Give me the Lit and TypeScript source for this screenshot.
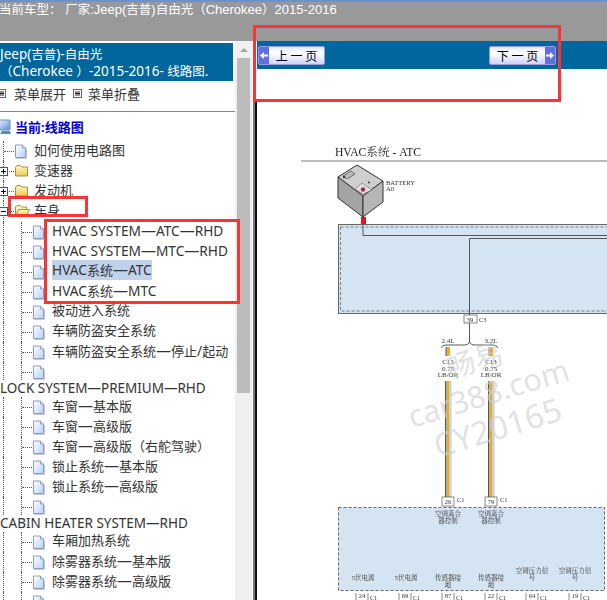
import { LitElement, html, css, svg } from "lit";
import { customElement } from "lit/decorators.js";

type Row = { t: string; k: "file" | "folder" | "open" | "sub" | "blank" | "head"; sel?: boolean };

const rows: Row[] = [
  { t: "如何使用电路图", k: "file" },
  { t: "变速器", k: "folder" },
  { t: "发动机", k: "folder" },
  { t: "车身", k: "open" },
  { t: "HVAC SYSTEM—ATC—RHD", k: "sub" },
  { t: "HVAC SYSTEM—MTC—RHD", k: "sub" },
  { t: "HVAC系统—ATC", k: "sub", sel: true },
  { t: "HVAC系统—MTC", k: "sub" },
  { t: "被动进入系统", k: "sub" },
  { t: "车辆防盗安全系统", k: "sub" },
  { t: "车辆防盗安全系统—停止/起动", k: "sub" },
  { t: "", k: "blank" },
  { t: "LOCK SYSTEM—PREMIUM—RHD", k: "head" },
  { t: "车窗—基本版", k: "sub" },
  { t: "车窗—高级版", k: "sub" },
  { t: "车窗—高级版（右舵驾驶）", k: "sub" },
  { t: "锁止系统—基本版", k: "sub" },
  { t: "锁止系统—高级版", k: "sub" },
  { t: "", k: "blank" },
  { t: "CABIN HEATER SYSTEM—RHD", k: "head" },
  { t: "车厢加热系统", k: "sub" },
  { t: "除雾器系统—基本版", k: "sub" },
  { t: "除雾器系统—高级版", k: "sub" },
  { t: "", k: "blank" },
];

/* Splits a label into Latin runs, dashes and CJK runs: the source's UI font sets them at different sizes. */
const mix = (t: string) =>
  t.split(/(—|[\x20-\x7e]+)/).filter(Boolean).map((p) =>
    p === "—"
      ? html`<span class="dash">—</span>`
      : /^[\x20-\x7e]+$/.test(p)
        ? html`<span class="lat">${p}</span>`
        : p
  );

const fileIcon = html`<svg class="ico" width="13" height="15" viewBox="0 0 13 15">
  <defs><linearGradient id="fg" x1="0" y1="0" x2="1" y2="1"><stop offset="0" stop-color="#ffffff"/><stop offset="1" stop-color="#b9d0f4"/></linearGradient></defs>
  <path d="M1.5 1H8.5L11.5 4V13.5H1.5Z" fill="url(#fg)" stroke="#8a9cc4"/>
  <path d="M8.5 1V4H11.5" fill="#e8eefa" stroke="#8a9cc4"/>
  <path d="M2 14.5H12.5V5" fill="none" stroke="#c8c8d0"/>
</svg>`;

const folderIcon = html`<svg class="ico" width="15" height="13" viewBox="0 0 15 13">
  <defs><linearGradient id="fo" x1="0" y1="0" x2="0" y2="1"><stop offset="0" stop-color="#fff6c4"/><stop offset="1" stop-color="#efc850"/></linearGradient></defs>
  <path d="M1.500 3.500L3 1.500H6.500L8 3H13.500V12H1.500Z" fill="url(#fo)" stroke="#a98f3c"/>
</svg>`;

const openIcon = html`<svg class="ico" width="17" height="13" viewBox="0 0 17 13">
  <path d="M1.500 11V3L3 1.500H6L7.500 3H12.500V5" fill="#fbf0bb" stroke="#a98f3c"/>
  <path d="M1.500 12H12.500L15.500 5.500H4.500Z" fill="url(#fo)" stroke="#a98f3c"/>
</svg>`;

const expander = (minus: boolean) => html`<svg class="exp" width="9" height="9" viewBox="0 0 9 9">
  <rect x=".5" y=".5" width="8" height="8" fill="#fff" stroke="#555"/>
  <path d="${minus ? "M2 4.500H7" : "M2 4.500H7M4.500 2V7"}" stroke="#000"/>
</svg>`;

const menuIcon = html`<svg class="mi" width="9" height="9" viewBox="0 0 9 9">
  <rect x=".5" y=".5" width="8" height="8" fill="#fff" stroke="#666"/>
  <path d="M2 3H7M2 4.500H7M2 6H7" stroke="#222"/>
</svg>`;

const computerIcon = html`<svg class="comp" width="14" height="16" viewBox="0 0 14 16">
  <defs><linearGradient id="cg" x1="0" y1="0" x2="1" y2="1"><stop offset="0" stop-color="#e6f2ff"/><stop offset="1" stop-color="#5b8fd6"/></linearGradient></defs>
  <rect x="1" y="1" width="11" height="10" rx="1" fill="url(#cg)" stroke="#6d88b4"/>
  <path d="M4 12H12L13 15H2Z" fill="#5f86c4"/>
</svg>`;

const arrow = (dir: 1 | -1) => svg`<path transform="${dir < 0 ? "translate(10 0) scale(-1 1)" : ""}" d="M1 4H5V1.500L9 5L5 8.500V6H1Z" fill="#fff"/>`;

const T = (x: number, y: number, s: string, size = 6.5, anchor = "middle") =>
  svg`<text x="${x}" y="${y}" font-size="${size}" text-anchor="${anchor}">${s}</text>`;

const wire = (x: number) => svg`
  <rect x="${x - 1}" y="381" width="1.4" height="116" fill="#3b5a80"/>
  <rect x="${x + 0.5}" y="381" width="3" height="116" fill="#eeaa1c"/>
  <rect x="${x + 3.5}" y="381" width="2" height="116" fill="#b7d4ee"/>`;

const pin = (x: number, y: number, n: string) => svg`
  <rect x="${x - 6}" y="${y}" width="12" height="9" fill="#fff" stroke="#555" stroke-width=".7"/>
  ${T(x, y + 7, n, 6.5)}
  ${T(x + 9, y + 5, "C1", 6.5, "start")}`;

const bottomPin = (x: number, n: string) => svg`
  <path d="M${x - 6} 593V600M${x + 6} 593V600" stroke="#555" stroke-width=".7" fill="none"/>
  ${T(x, 598, n, 6.5)}
  ${T(x + 8, 600, "C1", 6, "start")}`;

const diagram = svg`
  <text x="334" y="156" font-size="11.6" fill="#222">HVAC系统 - ATC</text>
  <path d="M300 161H607" stroke="#777" stroke-width="1"/>

  <path d="M337 177L356 165L382 181L362 196Z" fill="#cfcfcf" stroke="#333"/>
  <path d="M337 177L362 196V217L337 198Z" fill="#a4a4a4" stroke="#333"/>
  <path d="M362 196L382 181V202L362 217Z" fill="#b6b6b6" stroke="#333"/>
  <path d="M342 176L350 171L354 174L346 179Z" fill="#bcbcbc" stroke="#444" stroke-width=".7"/>
  <path d="M354 189L361 183L371 190L362 194Z" fill="#e0e0e0" stroke="#666" stroke-width=".6"/>
  <circle cx="362" cy="189.500" r="2.200" fill="#a33040"/>
  <circle cx="368" cy="182.500" r="1" fill="#333"/>
  <circle cx="343" cy="177" r="1.200" fill="#333"/>
  <text x="385" y="184.500" font-size="6.500" fill="#333">BATTERY</text>
  <text x="385" y="191" font-size="6.500" fill="#333">A0</text>

  <rect x="337.500" y="224.500" width="290" height="89" fill="#d5e4f3" stroke="#666" stroke-width="1"/>
  <rect x="339.500" y="227" width="290" height="84" fill="none" stroke="#666" stroke-width=".8" stroke-dasharray="3 2"/>
  <rect x="360" y="217" width="5" height="7" fill="#e8141c"/>
  <path d="M362 224V235.500H607" fill="none" stroke="#555" stroke-width="1"/>
  <path d="M468.500 315V238.500H607" fill="none" stroke="#555" stroke-width="1"/>

  <rect x="463" y="315" width="13" height="8" fill="#fff" stroke="#555" stroke-width=".7"/>
  ${T(469, 321.5, "39", 6.5)}
  ${T(478, 322, "C3", 6.5, "start")}
  <path d="M468.500 323V342M440 348Q441 345 445 345H464Q467 345 468.500 342Q470 345 473 345H492Q496 345 497 348" fill="none" stroke="#444" stroke-width=".9"/>
  ${T(447, 343, "2.4L", 7)}
  ${T(490, 343, "3.2L", 7)}
  <rect x="444.500" y="347" width="1.200" height="9" fill="#3b5a80"/>
  <rect x="446" y="347" width="3" height="9" fill="#eeaa1c"/>
  <rect x="487.500" y="347" width="1.200" height="9" fill="#888"/>
  <rect x="489" y="347" width="3" height="9" fill="#eeaa1c"/>
  ${T(447, 363.5, "C13", 7)}
  ${T(447, 370.5, "0.75", 7)}
  ${T(447, 377, "LB/OR", 7)}
  ${T(490, 363.5, "C13", 7)}
  ${T(490, 370.5, "0.75", 7)}
  ${T(490, 377, "LB/OR", 7)}
  ${wire(445)}
  ${wire(488)}

  <rect x="337.500" y="507.500" width="266" height="83" fill="#d5e4f3" stroke="#555" stroke-width=".9" stroke-dasharray="3 2"/>
  ${pin(447, 497, "26")}
  ${pin(490, 497, "79")}
  ${T(447, 516, "空调离合")}
  ${T(447, 523, "器控制")}
  ${T(490, 516, "空调离合")}
  ${T(490, 523, "器控制")}
  ${T(362, 580, "5伏电源")}
  ${T(405, 580, "5伏电源")}
  ${T(447, 580, "传感器接")}
  ${T(447, 587, "地")}
  ${T(490, 580, "传感器接")}
  ${T(490, 587, "地")}
  ${T(531, 573, "空调压力信")}
  ${T(531, 580, "号")}
  ${T(574, 573, "空调压力信")}
  ${T(574, 580, "号")}
  ${bottomPin(361, "24")}
  ${bottomPin(404, "69")}
  ${bottomPin(447, "87")}
  ${bottomPin(490, "22")}
  ${bottomPin(531, "64")}
  ${bottomPin(574, "19")}
`;

const marks = svg`
  <g fill="#cfcfcf" fill-opacity=".62" font-family="'Noto Sans','Noto Sans CJK SC',sans-serif">
    <text transform="translate(449 379) rotate(-17)" font-size="29" font-family="'Noto Sans CJK SC',sans-serif">畅易</text>
    <text transform="translate(411 428) rotate(-17)" font-size="30.500">car388.com</text>
    <text transform="translate(437 458) rotate(-17)" font-size="32.500">CY20165</text>
  </g>
`;

@customElement("app-root")
export class AppRoot extends LitElement {
  static styles = css`
    :host {
      display: block;
      width: 607px;
      height: 600px;
      overflow: hidden;
      position: relative;
      background: #fff;
      font-family: "Noto Sans", "Noto Sans CJK SC", sans-serif;
    }
    .lat { font-size: 13.7px; }
    .dash { font-size: 15px; }
    .top {
      height: 41px;
      box-sizing: border-box;
      background: linear-gradient(#6f8fd0 0 2px, #999 2px);
      color: #fff;
      font-family: "Liberation Sans", "Noto Sans CJK SC", sans-serif;
      font-size: 12.5px;
      line-height: 18px;
      padding-top: 1px;
      margin-left: -1px;
      white-space: pre;
    }
    .top .lat { font-size: 13px; }
    .main {
      display: flex;
      height: 559px;
    }
    .side {
      width: 235px;
      flex: none;
      overflow: hidden;
    }
    .brand {
      margin: 2px 2px 0 0;
      height: 38px;
      box-sizing: border-box;
      background: #00669b;
      color: #fff;
      font-size: 12.5px;
      line-height: 17px;
      padding: 3px 0 0 0;
      white-space: nowrap;
    }
    .brand .lat { font-size: 13.5px; }
    .menu {
      height: 31px;
      padding-bottom: 6px;
      display: flex;
      align-items: center;
      font-size: 13px;
      color: #333;
      border-bottom: 1px solid #888;
      box-sizing: border-box;
    }
    .mi { flex: none; display: block; }
    .m-a { margin: 0 8px 0 -3px; }
    .m-b { margin: 0 6px 0 7px; }
    .cur {
      height: 29px;
      display: flex;
      align-items: center;
      gap: 3px;
      color: #00c;
      font-weight: 700;
      font-size: 13px;
    }
    .comp { margin-left: -2px; flex: none; margin-top: 1px; }
    .row {
      height: 20px;
      display: flex;
      align-items: center;
      position: relative;
      font-size: 13px;
      color: #333;
      white-space: nowrap;
    }
    .row.blank { height: 18px; }
    .row.head { height: 17px; }
    .row.open-r { height: 21px; }
    .g1 {
      position: absolute;
      left: 3px;
      top: 0;
      bottom: 0;
      border-left: 1px dotted #555;
    }
    .g2 {
      position: absolute;
      left: 21px;
      top: 0;
      bottom: 0;
      border-left: 1px dotted #555;
    }
    .conn {
      position: absolute;
      top: 10px;
      height: 0;
      border-top: 1px dotted #555;
    }
    .c1 { left: 4px; width: 10px; }
    .c2 { left: 22px; width: 10px; }
    .exp { position: absolute; left: -1px; top: 6px; }
    .ico { position: absolute; top: 3px; }
    .row.l1 .ico { left: 14px; }
    .row.sub .ico, .row.blank .ico { left: 32px; }
    .row.open-r .ico { left: 14px; }
    .txt { position: absolute; top: -1px; line-height: 18px; }
    .row.l1 .txt { left: 34px; top: 0; }
    .row.sub .txt { left: 52px; top: -1px; }
    .row.sub .txt.sel { top: -2px; line-height: 19px; background: #c1d2ec; }
    .row.head .txt { left: 0; top: 1px; line-height: 15px; font-size: 13.5px; }
    .scroll {
      width: 17px;
      flex: none;
      background: #f0f0f0;
      display: flex;
      flex-direction: column;
      align-items: center;
      box-sizing: border-box;
    }
    .up {
      height: 17px;
      flex: none;
      display: flex;
      align-items: center;
      justify-content: center;
    }
    .tri {
      width: 0;
      height: 0;
      border-left: 4px solid transparent;
      border-right: 4px solid transparent;
      border-bottom: 4px solid #a6a6a6;
    }
    .thumb {
      width: 13px;
      height: 335px;
      background: #bcbcbc;
    }
    .rule {
      width: 4px;
      flex: none;
      margin-left: 1px;
      display: flex;
      flex-direction: column;
    }
    .rule-gap { height: 61px; flex: none; }
    .rule-line {
      flex: 1;
      background: linear-gradient(90deg, #777 0 2px, #111 2px);
    }
    .content {
      flex: 1;
      min-width: 0;
      display: flex;
      flex-direction: column;
    }
    .nav {
      height: 28px;
      flex: none;
      background: #00669b;
      display: flex;
      justify-content: space-between;
      align-items: center;
      padding: 0 51px 0 1px;
    }
    .btn {
      width: 67px;
      height: 19px;
      box-sizing: border-box;
      border: 1px solid #9a9ddd;
      border-radius: 2px;
      background: linear-gradient(#e6e8fe, #fff 35%, #d0d3f8);
      display: flex;
      align-items: center;
      color: #000;
      font-size: 12px;
      font-family: "Noto Sans CJK SC", sans-serif;
      white-space: pre;
    }
    .btn svg {
      width: 10px;
      height: 17px;
      background: #5f6fe0;
      flex: none;
    }
    .btn span { flex: 1; text-align: center; }
    .canvas { flex: 1; min-height: 0; }
    .canvas svg {
      display: block;
      width: 351px;
      height: 531px;
    }
    .draw {
      font-family: "Liberation Serif", "Noto Serif CJK SC", "Noto Sans CJK SC", serif;
      fill: #333;
      filter: blur(0.35px);
    }
    .mark {
      position: absolute;
      border: 3px solid #f63636;
      box-sizing: border-box;
      pointer-events: none;
    }
    .m1 { left: 253px; top: 25px; width: 308px; height: 77px; }
    .m2 { left: 8px; top: 196px; width: 80px; height: 21px; }
    .m3 { left: 44px; top: 219px; width: 196px; height: 85px; }
  `;

  private renderRow(r: Row) {
    if (r.k === "head") {
      return html`<div class="row head"><span class="txt">${r.t}</span></div>`;
    }
    if (r.k === "sub" || r.k === "blank") {
      return html`<div class="row ${r.k === "sub" ? "sub" : "blank"}">
        <i class="g1"></i><i class="g2"></i><i class="conn c2"></i>
        ${fileIcon}
        ${r.t ? html`<span class="txt ${r.sel ? "sel" : ""}">${mix(r.t)}</span>` : ""}
      </div>`;
    }
    const icon = r.k === "file" ? fileIcon : r.k === "folder" ? folderIcon : openIcon;
    return html`<div class="row l1 ${r.k === "open" ? "open-r" : ""}">
      <i class="g1"></i><i class="conn c1"></i>
      ${r.k === "file" ? "" : expander(r.k === "open")}
      ${icon}
      <span class="txt">${r.t}</span>
    </div>`;
  }

  render() {
    return html`
      <div class="top">${mix("当前车型： 厂家:Jeep(吉普)自由光（Cherokee）2015-2016")}</div>
      <div class="main">
        <div class="side">
          <div class="brand">${mix("Jeep(吉普)-自由光")}<br />${mix("（Cherokee ）-2015-2016- 线路图.")}</div>
          <div class="menu">
            <span class="m-a">${menuIcon}</span><span>菜单展开</span>
            <span class="m-b">${menuIcon}</span><span>菜单折叠</span>
          </div>
          <div class="cur">${computerIcon}<span>当前:线路图</span></div>
          ${rows.map((r) => this.renderRow(r))}
        </div>
        <div class="scroll">
          <div class="up"><div class="tri"></div></div>
          <div class="thumb"></div>
        </div>
        <div class="rule"><div class="rule-gap"></div><div class="rule-line"></div></div>
        <div class="content">
          <div class="nav">
            <div class="btn">
              <svg viewBox="0 0 10 17"><g transform="translate(0 3.500)">${arrow(-1)}</g></svg>
              <span>上 一 页</span>
            </div>
            <div class="btn">
              <span>下 一 页</span>
              <svg viewBox="0 0 10 17"><g transform="translate(0 3.500)">${arrow(1)}</g></svg>
            </div>
          </div>
          <div class="canvas">
            <svg viewBox="256 69 351 531" xmlns="http://www.w3.org/2000/svg">
              <g class="draw">${diagram}</g>
              ${marks}
            </svg>
          </div>
        </div>
      </div>
      <div class="mark m1"></div>
      <div class="mark m2"></div>
      <div class="mark m3"></div>
    `;
  }
}
